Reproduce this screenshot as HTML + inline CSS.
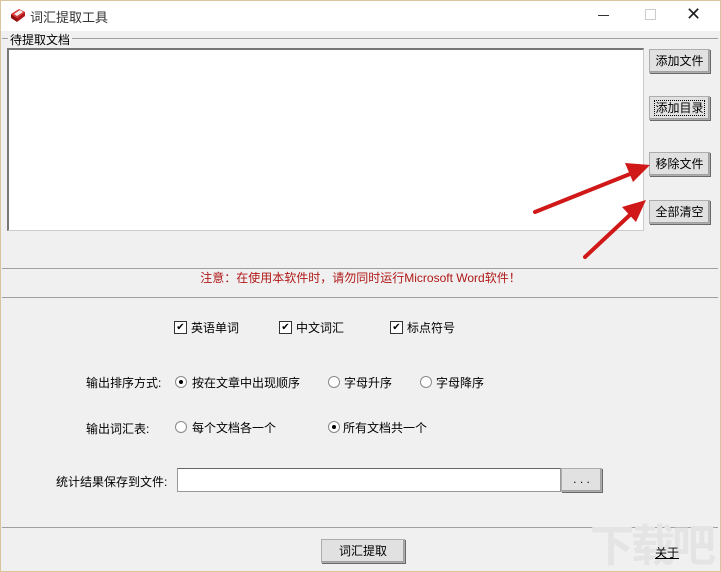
<!DOCTYPE html><html><head><meta charset="utf-8"><style>
html,body{margin:0;width:721px;height:572px;overflow:hidden}
body{background:#f0f0f0;position:relative;font-family:"Liberation Sans","Noto Sans CJK SC",sans-serif;font-size:12px;color:#000}
.a{position:absolute;white-space:nowrap}
.btn{position:absolute;background:#e1e1e1;border:1px solid #adadad;box-shadow:inset -1px -1px #a0a0a0,1px 1px #696969;text-align:center;font-size:12px;line-height:22px}
.cb{position:absolute;width:11px;height:11px;border:1px solid #333;background:#fff;font-size:10px;line-height:11px;text-align:center}
.rd{position:absolute;width:10px;height:10px;border-radius:50%;border:1px solid #888;background:#fff}
.rd.on::after{content:"";position:absolute;left:3px;top:3px;width:4px;height:4px;border-radius:50%;background:#000}
</style></head><body>
<div class="a" style="left:0;top:0;width:721px;height:31px;background:#fff"></div>
<div class="a" style="left:0;top:0;width:1px;height:572px;background:#d9c49b"></div>
<div class="a" style="left:720px;top:0;width:1px;height:572px;background:#d9c49b"></div>
<div class="a" style="left:0;top:0;width:721px;height:1px;background:#d9c49b"></div>
<div class="a" style="left:0;top:571px;width:721px;height:1px;background:#d9c49b"></div>
<svg class="a" style="left:9px;top:7px" width="18" height="16"><path d="M2 7 L10 2 L16 5 L8 11Z" fill="#d33"/><path d="M2 7 L8 11 L8 15 L2 11Z" fill="#901010"/><path d="M8 11 L16 5 L16 9 L8 15Z" fill="#b01818"/><path d="M5 7 L11 3 L14 5 L8 9Z" fill="#eee"/></svg>
<div class="a" style="left:30px;top:7px;font-size:13px;color:#333">词汇提取工具</div>
<div class="a" style="left:598px;top:15px;width:11px;height:1px;background:#333"></div>
<div class="a" style="left:645px;top:9px;width:9px;height:9px;border:1px solid #ccc"></div>
<div class="a" style="left:686px;top:4px;font-size:18px;color:#222">✕</div>
<div class="a" style="left:2px;top:38px;width:716px;height:229px;border-top:1px solid #a0a0a0;border-bottom:1px solid #a0a0a0"></div>
<div class="a" style="left:8px;top:31px;background:#f0f0f0;padding:0 2px;font-size:12px">待提取文档</div>
<div class="a" style="left:7px;top:48px;width:634px;height:180px;background:#fff;border:1px solid #ccc;border-top:2px solid #777;border-left:2px solid #777"></div>
<div class="btn" style="left:649px;top:49px;width:59px;height:22px">添加文件</div>
<div class="btn" style="left:649px;top:96px;width:59px;height:22px"><span style="outline:1px dotted #000">添加目录</span></div>
<div class="btn" style="left:649px;top:152px;width:59px;height:22px">移除文件</div>
<div class="btn" style="left:649px;top:200px;width:59px;height:22px">全部清空</div>
<svg class="a" style="left:0;top:0" width="721" height="572"><g stroke="#d01818" stroke-width="4" stroke-linecap="round"><line x1="535" y1="212" x2="635" y2="172"/><line x1="585" y1="257" x2="632" y2="213"/></g><path d="M650 165 L625 163 L633 182Z" fill="#d01818"/><path d="M646 200 L622 207 L636 222Z" fill="#d01818"/></svg>
<div class="a" style="left:0;top:269px;width:721px;text-align:center;color:#b01818;font-size:12px">注意：在使用本软件时，请勿同时运行Microsoft Word软件！</div>
<div class="a" style="left:2px;top:297px;width:716px;height:229px;border-top:1px solid #a0a0a0;border-bottom:1px solid #a0a0a0"></div>
<div class="cb" style="left:174px;top:321px">✔</div><div class="a" style="left:191px;top:319px">英语单词</div>
<div class="cb" style="left:279px;top:321px">✔</div><div class="a" style="left:296px;top:319px">中文词汇</div>
<div class="cb" style="left:390px;top:321px">✔</div><div class="a" style="left:407px;top:319px">标点符号</div>
<div class="a" style="left:86px;top:374px">输出排序方式:</div>
<div class="rd on" style="left:175px;top:376px"></div><div class="a" style="left:192px;top:374px">按在文章中出现顺序</div>
<div class="rd" style="left:328px;top:376px"></div><div class="a" style="left:344px;top:374px">字母升序</div>
<div class="rd" style="left:420px;top:376px"></div><div class="a" style="left:436px;top:374px">字母降序</div>
<div class="a" style="left:86px;top:420px">输出词汇表:</div>
<div class="rd" style="left:175px;top:421px"></div><div class="a" style="left:192px;top:419px">每个文档各一个</div>
<div class="rd on" style="left:328px;top:421px"></div><div class="a" style="left:343px;top:419px">所有文档共一个</div>
<div class="a" style="left:56px;top:473px">统计结果保存到文件:</div>
<div class="a" style="left:177px;top:468px;width:382px;height:22px;background:#fff;border:1px solid #999;border-top:1px solid #666"></div>
<div class="btn" style="left:561px;top:468px;width:39px;height:22px;line-height:20px">. . .</div>
<div class="btn" style="left:321px;top:539px;width:82px;height:22px">词汇提取</div>
<div class="a" style="left:590px;top:522px;font-size:44px;line-height:50px;color:#e4e4e4;font-weight:bold;letter-spacing:-3px">下载吧</div>
<div class="a" style="left:655px;top:544px;text-decoration:underline">关于</div>
</body></html>
